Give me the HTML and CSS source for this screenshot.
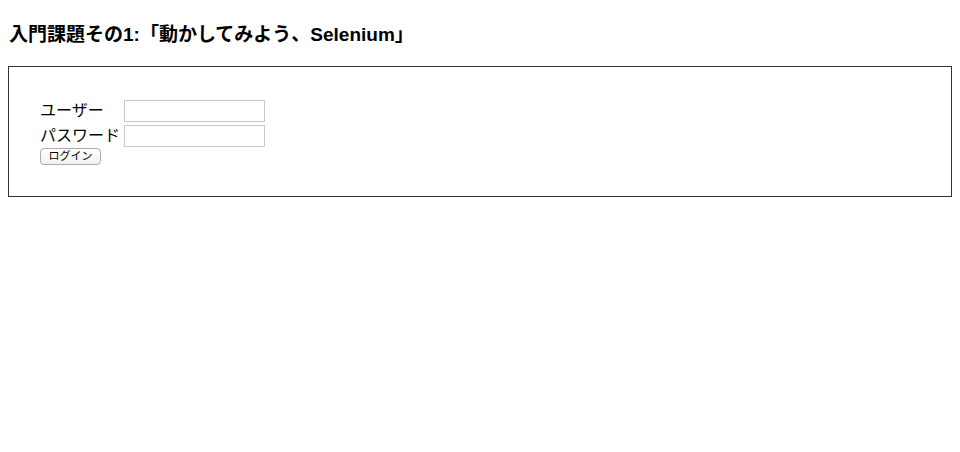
FILE: index.html
```html
<!DOCTYPE html>
<html lang="ja">
<head>
<meta charset="utf-8">
<title>入門課題その1</title>
<link rel="stylesheet" href="styles.css">
</head>
<body>
<h3 class="title">入門課題その1:「動かしてみよう、Selenium」</h3>
<div class="panel">
  <form class="login">
    <label class="label" for="user">ユーザー</label>
    <input class="field" id="user" type="text">
    <label class="label" for="pass">パスワード</label>
    <input class="field" id="pass" type="password">
    <button class="btn" type="button">ログイン</button>
  </form>
</div>
</body>
</html>
```
FILE: styles.css
```css
html, body {
  background: #fff;
}
body {
  margin: 8px;
  font-family: "Liberation Sans", "Noto Sans CJK JP", sans-serif;
  color: #000;
}
.title {
  margin: 15px 0 0;
  height: 43px;
  font-size: 19px;
  line-height: 24px;
  font-weight: bold;
  padding-left: 1px;
}
.panel {
  border: 1px solid #333;
  padding: 33px 31px 31px;
}
.login {
  display: grid;
  grid-template-columns: max-content 141px;
  column-gap: 4px;
  grid-template-rows: 25px 23px 17px;
  align-items: start;
  justify-content: start;
}
.label {
  font-size: 16px;
  line-height: 22px;
}
.field {
  box-sizing: border-box;
  width: 141px;
  height: 22px;
  margin: 0;
  border: 1px solid #c8c8c8;
  border-radius: 0;
  padding: 0 3px;
  background: #fff;
  outline: none;
}
.btn {
  grid-column: 1;
  box-sizing: border-box;
  width: 61px;
  height: 17px;
  padding: 0;
  font-family: "Liberation Sans", "Noto Sans CJK JP", sans-serif;
  font-size: 11px;
  line-height: 15px;
  color: #000;
  background: linear-gradient(#fff, #f1f1f1);
  border: 1px solid #aaa;
  border-radius: 4px;
}
```
